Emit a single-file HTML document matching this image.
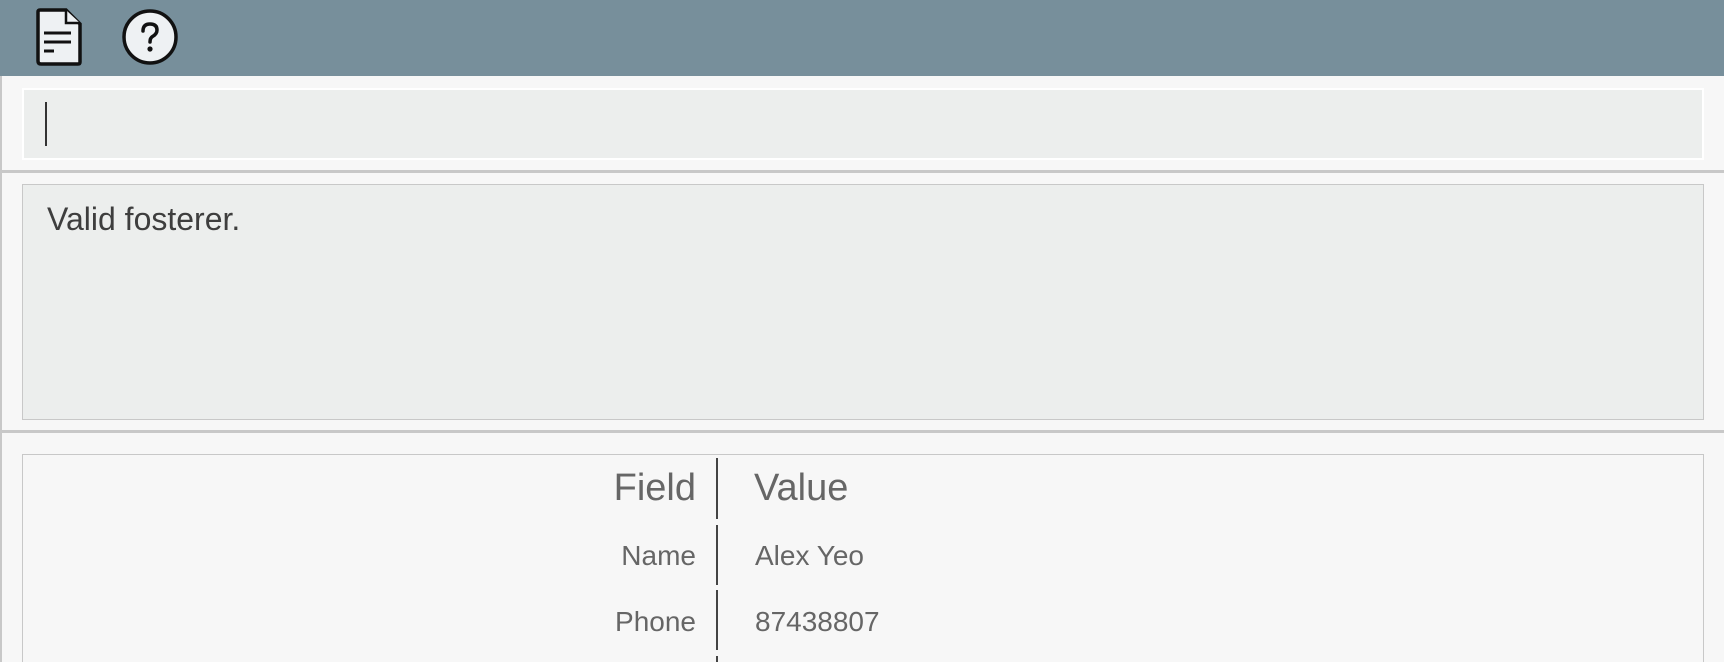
<!DOCTYPE html><html><head><style>
html,body{margin:0;width:1724px;height:662px;overflow:hidden}
body{background:#f7f7f7;font-family:"Liberation Sans",sans-serif;position:relative}
.hdr{position:absolute;left:0;top:0;width:1724px;height:76px;background:#778f9b}
.a{position:absolute}
</style></head><body>
<div class="hdr">
<svg class="a" style="left:34px;top:6px" width="50" height="62" viewBox="0 0 50 62"><path d="M6 4 H32 L46 18 V56 Q46 58 44 58 H7 Q4 58 4 55 V6 Q4 4 6 4 Z" fill="#eef1f3" stroke="#111" stroke-width="3.5"/><path d="M32 4 V17 H46" fill="#eef1f3" stroke="#111" stroke-width="2.5"/><path d="M10 27 H37 M10 36 H37 M10 45 H20" stroke="#111" stroke-width="3"/></svg>
<svg class="a" style="left:121px;top:8px" width="58" height="58" viewBox="0 0 58 58"><circle cx="29" cy="29" r="26" fill="#eef1f3" stroke="#111" stroke-width="3.5"/><path d="M22 23 Q22 16 29 16 Q36 16 36 22 Q36 26 31.5 28.5 Q29 30 29 34" fill="none" stroke="#111" stroke-width="3.5" stroke-linecap="round"/><circle cx="29" cy="41" r="2.6" fill="#111"/></svg>
</div>
<div class="a" style="left:0;top:76px;width:2px;height:586px;background:#c8c8c8"></div>
<div class="a" style="left:22px;top:88px;width:1682px;height:72px;background:#fff"></div>
<div class="a" style="left:24px;top:90px;width:1678px;height:68px;background:#eceeed"></div>
<div class="a" style="left:45px;top:102px;width:1.5px;height:44px;background:#333"></div>
<div class="a" style="left:0;top:170px;width:1724px;height:3px;background:#c8c8c8"></div>
<div class="a" style="left:22px;top:184px;width:1680px;height:234px;border:1px solid #c8c8c8;background:#eceeed"></div>
<div class="a" style="left:47px;top:201px;font-size:32px;color:#3e3e3e">Valid fosterer.</div>
<div class="a" style="left:0;top:430px;width:1724px;height:3px;background:#c8c8c8"></div>
<div class="a" style="left:22px;top:454px;width:1680px;height:220px;border:1px solid #c8c8c8;border-bottom:none;background:#f7f7f7"></div>
<div class="a" style="left:716px;top:458px;width:2px;height:61px;background:#444"></div>
<div class="a" style="left:716px;top:525px;width:2px;height:60px;background:#444"></div>
<div class="a" style="left:716px;top:590px;width:2px;height:60px;background:#444"></div>
<div class="a" style="left:716px;top:656px;width:2px;height:6px;background:#444"></div>
<div class="a" style="right:1028px;top:467px;font-size:38px;color:#666">Field</div>
<div class="a" style="left:754px;top:467px;font-size:38px;color:#666">Value</div>
<div class="a" style="right:1028px;top:540px;font-size:28px;color:#666">Name</div>
<div class="a" style="left:755px;top:540px;font-size:28px;color:#666">Alex Yeo</div>
<div class="a" style="right:1028px;top:606px;font-size:28px;color:#666">Phone</div>
<div class="a" style="left:755px;top:606px;font-size:28px;color:#666">87438807</div>
</body></html>
